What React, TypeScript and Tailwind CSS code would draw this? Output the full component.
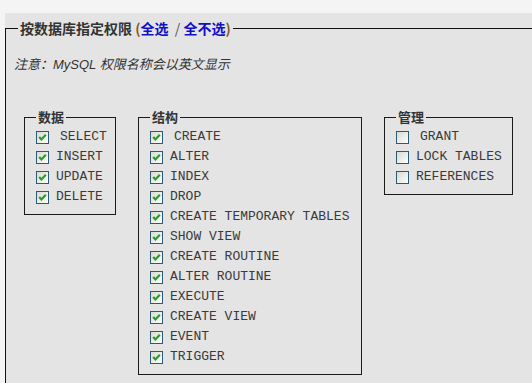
import React from 'react';

type Priv = { label: string; checked: boolean; indent?: boolean };

const dataPrivs: Priv[] = [
  { label: 'SELECT', checked: true, indent: true },
  { label: 'INSERT', checked: true },
  { label: 'UPDATE', checked: true },
  { label: 'DELETE', checked: true },
];

const structPrivs: Priv[] = [
  { label: 'CREATE', checked: true, indent: true },
  { label: 'ALTER', checked: true },
  { label: 'INDEX', checked: true },
  { label: 'DROP', checked: true },
  { label: 'CREATE TEMPORARY TABLES', checked: true },
  { label: 'SHOW VIEW', checked: true },
  { label: 'CREATE ROUTINE', checked: true },
  { label: 'ALTER ROUTINE', checked: true },
  { label: 'EXECUTE', checked: true },
  { label: 'CREATE VIEW', checked: true },
  { label: 'EVENT', checked: true },
  { label: 'TRIGGER', checked: true },
];

const adminPrivs: Priv[] = [
  { label: 'GRANT', checked: false, indent: true },
  { label: 'LOCK TABLES', checked: false },
  { label: 'REFERENCES', checked: false },
];

const XpCheckbox = ({ checked }: { checked: boolean }) => (
  <svg width="13" height="13" viewBox="0 0 13 13" className="shrink-0">
    <defs>
      <linearGradient id="cbfill" x1="0" y1="0" x2="1" y2="1">
        <stop offset="0" stopColor="#d8d8d0" />
        <stop offset="1" stopColor="#ffffff" />
      </linearGradient>
    </defs>
    <rect x="0.5" y="0.5" width="12" height="12" fill="url(#cbfill)" stroke="#2a5a78" />
    {checked && (
      <path d="M3.2 6 L5.4 8.4 L9.8 3.8" fill="none" stroke="#22a022" strokeWidth="2.2" />
    )}
  </svg>
);

const PrivGroup = ({ title, items, width }: { title: string; items: Priv[]; width: string }) => (
  <fieldset className={`border border-[#1a1a1a] ${width} pl-[11px] pt-[2px] pb-[7px]`}>
    <legend className="px-[2px] text-[13px] leading-[16px] font-bold text-[#333] font-['Noto_Sans_CJK_SC',sans-serif]">
      {title}
    </legend>
    {items.map(p => (
      <label key={p.label} className="flex items-center h-[20px] gap-[7px]">
        <XpCheckbox checked={p.checked} />
        <span
          className={`font-['Liberation_Mono',monospace] text-[13px] text-[#3a3a3a] whitespace-pre ${p.indent ? 'pl-[4px]' : ''}`}
        >
          {p.label}
        </span>
      </label>
    ))}
  </fieldset>
);

const App = () => {
  return (
    <div className="w-[532px] h-[383px] overflow-hidden bg-[#f4f4f4] pt-[13px] pl-[5px]">
      <div className="w-[580px] h-[400px] bg-[#e4e4e4] pt-[5px]">
        <fieldset className="border border-[#111] h-[390px] pl-[8px]">
          <legend className="ml-[4px] px-[2px] text-[14px] leading-[20px] font-bold text-[#333] font-['Noto_Sans_CJK_SC',sans-serif] whitespace-pre">
            {'按数据库指定权限 '}
            <span className="text-[#8a5a20]">(</span>
            <a className="text-[#1010c8]">全选</a>
            <span className="font-normal text-[#555]">{'  / '}</span>
            <a className="text-[#1010c8]">全不选</a>
            <span className="text-[#8a5a20]">)</span>
          </legend>
          <p className="mt-[19px] text-[13px] leading-[16px] italic text-[#333] font-['Liberation_Sans','Noto_Sans_CJK_SC',sans-serif]">
            注意：MySQL 权限名称会以英文显示
          </p>
          <div className="flex items-start ml-[10px] mt-[36px] gap-[22px]">
            <PrivGroup title="数据" items={dataPrivs} width="w-[92px]" />
            <PrivGroup title="结构" items={structPrivs} width="w-[224px]" />
            <PrivGroup title="管理" items={adminPrivs} width="w-[129px]" />
          </div>
        </fieldset>
      </div>
    </div>
  );
};

export default App;
